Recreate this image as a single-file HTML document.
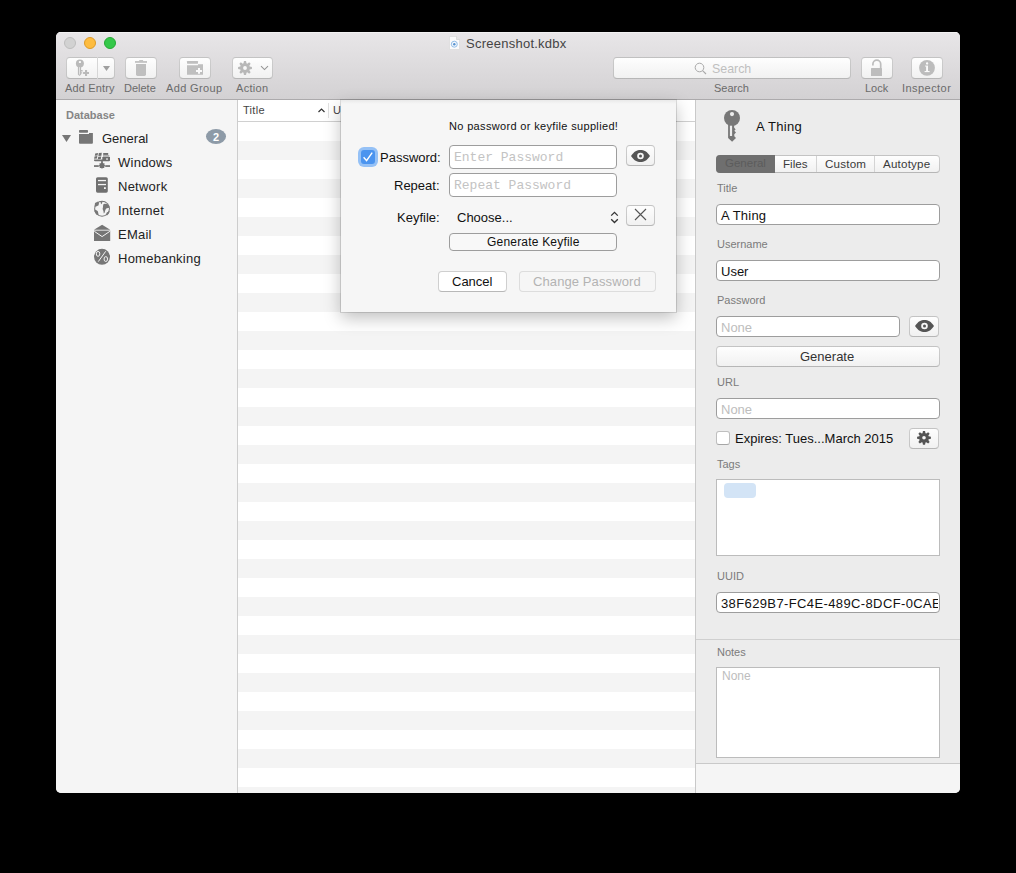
<!DOCTYPE html>
<html><head><meta charset="utf-8">
<style>
*{margin:0;padding:0;box-sizing:border-box}
html,body{width:1016px;height:873px;background:#000;overflow:hidden}
body{font-family:"Liberation Sans",sans-serif;color:#222;position:relative}
#win{position:absolute;left:56px;top:32px;width:904px;height:761px;border-radius:5px;overflow:hidden;background:#f5f5f5}
#in{position:absolute;left:-56px;top:-32px;width:1016px;height:873px}
.a{position:absolute}
.t{position:absolute;white-space:nowrap;line-height:1}
.s11{font-size:11px}.s12{font-size:12px}.s13{font-size:13px}
.btn{position:absolute;border-radius:4px;background:linear-gradient(#fefefe,#f1f1f1);border:1px solid rgba(0,0,0,.19);border-bottom-color:rgba(0,0,0,.28)}
.fld{position:absolute;background:#fff;border:1px solid #9d9d9d;border-radius:4px}
.lbl{position:absolute;white-space:nowrap;line-height:1;font-size:11px;color:#7b7b7b}
.row{position:absolute;left:238px;width:457px;height:19px;background:#f4f4f4}
</style></head><body>
<div id="win"><div id="in">

<!-- toolbar -->
<div class="a" style="left:56px;top:32px;width:904px;height:67px;background:linear-gradient(#e8e6e8,#d3d1d3);"></div>
<div class="a" style="left:56px;top:32px;width:904px;height:1px;background:#f2f1f2"></div>
<div class="a" style="left:56px;top:99px;width:904px;height:1px;background:#acaaac"></div>

<!-- traffic lights -->
<div class="a" style="left:64px;top:37px;width:12px;height:12px;border-radius:50%;background:#d2d2d2;border:0.5px solid #bdbdbd"></div>
<div class="a" style="left:84px;top:37px;width:12px;height:12px;border-radius:50%;background:#fdbc40;border:0.5px solid #dc9a27"></div>
<div class="a" style="left:104px;top:37px;width:12px;height:12px;border-radius:50%;background:#35c84a;border:0.5px solid #26a934"></div>

<!-- title -->
<svg class="a" style="left:449px;top:36px" width="11" height="14" viewBox="0 0 11 14"><path d="M0.5 0.5h7l3 3v10h-10z" fill="#fbfbfb" stroke="#dadada" stroke-width="0.7"/><path d="M7.5 0.5v3h3" fill="#e6e6e6" stroke="#cfcfcf" stroke-width="0.6"/><circle cx="5.3" cy="8.2" r="3" fill="#f4f8fc" stroke="#93bfe8" stroke-width="1"/><circle cx="5.3" cy="8.2" r="1.2" fill="#5792cf"/></svg>
<div class="t s13" style="left:466px;top:37px;color:#444;letter-spacing:.25px">Screenshot.kdbx</div>

<!-- toolbar buttons -->
<div class="btn" style="left:66px;top:57px;width:49px;height:22px"></div>
<div class="a" style="left:97px;top:57px;width:1px;height:22px;background:#d6d6d6"></div>
<div class="btn" style="left:125px;top:57px;width:32px;height:22px"></div>
<div class="btn" style="left:179px;top:57px;width:32px;height:22px"></div>
<div class="btn" style="left:232px;top:57px;width:41px;height:22px"></div>
<div class="btn" style="left:613px;top:57px;width:238px;height:22px;border-color:rgba(0,0,0,.2);border-bottom-color:rgba(0,0,0,.28)"></div>
<div class="btn" style="left:861px;top:57px;width:32px;height:22px"></div>
<div class="btn" style="left:911px;top:57px;width:32px;height:22px"></div>

<div class="t" style="left:712px;top:63px;color:#bfbfbf;font-size:12.4px">Search</div>
<div class="t s11" style="left:65px;top:83px;color:#6b6b6b;letter-spacing:.15px">Add Entry</div>
<div class="t s11" style="left:124px;top:83px;color:#6b6b6b">Delete</div>
<div class="t s11" style="left:166px;top:83px;color:#6b6b6b;letter-spacing:.35px">Add Group</div>
<div class="t s11" style="left:236px;top:83px;color:#6b6b6b;letter-spacing:.3px">Action</div>
<div class="t s11" style="left:714px;top:83px;color:#6b6b6b">Search</div>
<div class="t s11" style="left:865px;top:83px;color:#6b6b6b">Lock</div>
<div class="t s11" style="left:902px;top:83px;color:#6b6b6b;letter-spacing:.45px">Inspector</div>

<!-- sidebar -->
<div class="a" style="left:56px;top:100px;width:181px;height:693px;background:#f5f5f5"></div>
<div class="a" style="left:237px;top:100px;width:1px;height:693px;background:#cdcdcd"></div>
<div class="t s11" style="left:66px;top:110px;color:#858585;font-weight:bold">Database</div>
<div class="t s13" style="left:102px;top:132px;color:#222">General</div>
<div class="t s13" style="left:118px;top:156px;color:#222;letter-spacing:.25px">Windows</div>
<div class="t s13" style="left:118px;top:180px;color:#222;letter-spacing:.25px">Network</div>
<div class="t s13" style="left:118px;top:204px;color:#222;letter-spacing:.25px">Internet</div>
<div class="t s13" style="left:118px;top:228px;color:#222;letter-spacing:.25px">EMail</div>
<div class="t s13" style="left:118px;top:252px;color:#222;letter-spacing:.25px">Homebanking</div>
<div class="a" style="left:206px;top:129px;width:20px;height:15px;border-radius:50%;background:#8d9aa7"></div>
<div class="t s11" style="left:213px;top:132px;color:#fff;font-weight:bold">2</div>

<!-- table -->
<div class="a" style="left:238px;top:100px;width:457px;height:693px;background:#fff"></div>
<div class="a" style="left:238px;top:121px;width:457px;height:1px;background:#d0d0d0"></div>
<div class="t s11" style="left:243px;top:105px;color:#444;letter-spacing:.3px">Title</div>
<div class="a" style="left:328px;top:103px;width:1px;height:15px;background:#e0e0e0"></div>
<div class="t s11" style="left:333px;top:105px;color:#444">U</div>
<div class="row" style="top:141px"></div><div class="row" style="top:179px"></div><div class="row" style="top:217px"></div><div class="row" style="top:255px"></div><div class="row" style="top:293px"></div><div class="row" style="top:331px"></div><div class="row" style="top:369px"></div><div class="row" style="top:407px"></div><div class="row" style="top:445px"></div><div class="row" style="top:483px"></div><div class="row" style="top:521px"></div><div class="row" style="top:559px"></div><div class="row" style="top:597px"></div><div class="row" style="top:635px"></div><div class="row" style="top:673px"></div><div class="row" style="top:711px"></div><div class="row" style="top:749px"></div><div class="row" style="top:787px"></div>

<!-- inspector -->
<div class="a" style="left:695px;top:100px;width:1px;height:693px;background:#c9c9c9"></div>
<div class="a" style="left:696px;top:100px;width:264px;height:663px;background:#ececec"></div>
<div class="a" style="left:696px;top:639px;width:264px;height:1px;background:#cfcfcf"></div>
<div class="a" style="left:696px;top:763px;width:264px;height:1px;background:#c9c9c9"></div>
<div class="a" style="left:696px;top:764px;width:264px;height:29px;background:#f5f5f5"></div>

<div class="t s13" style="left:756px;top:120px;color:#111;letter-spacing:.3px">A Thing</div>

<div class="btn" style="left:716px;top:155px;width:224px;height:18px"></div>
<div class="a" style="left:716px;top:155px;width:59px;height:18px;background:#6f6f6f;border-radius:4px 0 0 4px"></div>
<div class="a" style="left:816px;top:156px;width:1px;height:16px;background:#d4d4d4"></div>
<div class="a" style="left:874px;top:156px;width:1px;height:16px;background:#d4d4d4"></div>
<div class="t" style="left:725px;top:158px;color:#5c5c5c;font-size:11.5px">General</div>
<div class="t" style="left:783px;top:158px;color:#3a3a3a;font-size:11.6px">Files</div>
<div class="t" style="left:825px;top:158px;color:#3a3a3a;font-size:11.6px;letter-spacing:.2px">Custom</div>
<div class="t" style="left:883px;top:158px;color:#3a3a3a;font-size:11.6px;letter-spacing:.2px">Autotype</div>
<div class="lbl" style="left:717px;top:183px">Title</div>
<div class="fld" style="left:716px;top:204px;width:224px;height:21px"></div>
<div class="t s13" style="left:721px;top:209px;color:#111;letter-spacing:.2px">A Thing</div>

<div class="lbl" style="left:717px;top:239px">Username</div>
<div class="fld" style="left:716px;top:260px;width:224px;height:21px"></div>
<div class="t s13" style="left:721px;top:265px;color:#111">User</div>

<div class="lbl" style="left:717px;top:295px">Password</div>
<div class="fld" style="left:716px;top:316px;width:184px;height:21px"></div>
<div class="t s13" style="left:721px;top:321px;color:#bdbdbd">None</div>
<div class="btn" style="left:909px;top:316px;width:30px;height:21px"></div>
<div class="btn" style="left:716px;top:346px;width:224px;height:21px"></div>
<div class="t s13" style="left:800px;top:350px;color:#333">Generate</div>

<div class="lbl" style="left:717px;top:377px">URL</div>
<div class="fld" style="left:716px;top:398px;width:224px;height:21px"></div>
<div class="t s13" style="left:721px;top:403px;color:#bdbdbd">None</div>

<div class="a" style="left:716px;top:431px;width:14px;height:14px;border-radius:3px;background:#fff;border:1px solid rgba(0,0,0,.25);border-bottom-color:rgba(0,0,0,.35)"></div>
<div class="t s13" style="left:735px;top:432px;color:#111">Expires: Tues...March 2015</div>
<div class="btn" style="left:909px;top:428px;width:30px;height:21px"></div>

<div class="lbl" style="left:717px;top:459px">Tags</div>
<div class="a" style="left:716px;top:479px;width:224px;height:77px;background:#fff;border:1px solid #bcbcbc"></div>
<div class="a" style="left:724px;top:483px;width:32px;height:15px;border-radius:4px;background:#d3e4f6"></div>

<div class="lbl" style="left:717px;top:571px">UUID</div>
<div class="fld" style="left:716px;top:592px;width:224px;height:21px;overflow:hidden"><div class="t s13" style="left:4px;top:4px;color:#111;letter-spacing:.38px;width:217px;overflow:hidden">38F629B7-FC4E-489C-8DCF-0CAE</div></div>

<div class="lbl" style="left:717px;top:647px">Notes</div>
<div class="a" style="left:716px;top:667px;width:224px;height:91px;background:#fff;border:1px solid #bcbcbc"></div>
<div class="t s12" style="left:722px;top:670px;color:#bdbdbd">None</div>

<!-- dialog -->
<div class="a" style="left:341px;top:100px;width:335px;height:212px;background:#f6f6f6;box-shadow:0 0 0 1px rgba(0,0,0,.12),0 6px 16px rgba(0,0,0,.25)"></div>
<div class="a" style="left:341px;top:100px;width:335px;height:4px;background:linear-gradient(rgba(0,0,0,.05),rgba(0,0,0,0))"></div>
<div class="t s11" style="left:449px;top:121px;color:#111;letter-spacing:.34px">No password or keyfile supplied!</div>
<div class="a" style="left:358px;top:147px;width:20px;height:20px;border-radius:6px;background:#95c1f6"></div>
<div class="a" style="left:361px;top:150px;width:14px;height:14px;border-radius:3px;background:#4b94ef"></div>
<div class="t s13" style="left:380px;top:151px;color:#111">Password:</div>
<div class="fld" style="left:449px;top:145px;width:168px;height:24px"></div>
<div class="t" style="left:454px;top:151px;font-family:'Liberation Mono',monospace;font-size:13px;color:#c3c3c3">Enter Password</div>
<div class="btn" style="left:626px;top:145px;width:29px;height:21px"></div>
<div class="t s13" style="left:394px;top:179px;color:#111">Repeat:</div>
<div class="fld" style="left:449px;top:173px;width:168px;height:24px"></div>
<div class="t" style="left:454px;top:179px;font-family:'Liberation Mono',monospace;font-size:13px;color:#c3c3c3">Repeat Password</div>
<div class="t s13" style="left:397px;top:211px;color:#111">Keyfile:</div>
<div class="t s13" style="left:457px;top:211px;color:#111">Choose...</div>
<div class="btn" style="left:626px;top:205px;width:29px;height:21px"></div>
<div class="fld" style="left:449px;top:233px;width:168px;height:18px;background:#f8f8f8"></div>
<div class="t s12" style="left:487px;top:236px;color:#111;letter-spacing:.2px">Generate Keyfile</div>
<div class="btn" style="left:438px;top:271px;width:69px;height:21px;background:#fff"></div>
<div class="t s13" style="left:452px;top:275px;color:#111">Cancel</div>
<div class="btn" style="left:519px;top:271px;width:137px;height:21px;background:#f6f6f6;border-color:rgba(0,0,0,.1)"></div>
<div class="t s13" style="left:533px;top:275px;color:#b3b3b3;letter-spacing:.1px">Change Password</div>

<svg class="a" style="left:0;top:0" width="1016" height="873" viewBox="0 0 1016 873">
<!-- toolbar: key plus -->
<g fill="#bababa">
<circle cx="79.9" cy="63.5" r="4"/>
<path d="M77.9 66.5H81.1V70H82.6V71.4H81.1V72.2H82.2V73.5H81.1V74.6L79.5 76L77.9 74.6Z"/>
<rect x="83.1" y="13.9" width="0" height="0"/>
<path d="M83.1 71.9H85V70H87.1V71.9H89V74H87.1V75.9H85V74H83.1Z"/>
</g>
<rect x="78.9" y="61.1" width="2" height="1.9" fill="#fafafa"/>
<rect x="79.2" y="67.2" width="0.7" height="7.3" fill="#f4f4f4"/>
<path d="M103 66H110L106.5 71Z" fill="#9f9f9f"/>
<!-- trash -->
<g fill="#bfbfbf">
<rect x="139.2" y="60.1" width="3.9" height="1.2"/>
<rect x="135" y="61.1" width="12" height="1.7"/>
<path d="M136 64H146V74.3Q146 75.9 144.4 75.9H137.6Q136 75.9 136 74.3Z"/>
</g>
<!-- add group -->
<g fill="#bfbfbf">
<rect x="187" y="61.1" width="11" height="2.6" rx="0.4"/>
<path d="M187 65.2H198V64.2H203V74.8H187Z"/>
</g>
<path d="M196 69.9H198V68H200V69.9H202V71.9H200V73.7H198V71.9H196Z" fill="#fafafa"/>
<!-- action gear -->
<path fill="#b8b8b8" fill-rule="evenodd" d="M243.52 63.33 L243.95 61.08 L246.05 61.08 L246.48 63.33 L247.26 63.65 L249.15 62.37 L250.63 63.85 L249.35 65.74 L249.67 66.52 L251.92 66.95 L251.92 69.05 L249.67 69.48 L249.35 70.26 L250.63 72.15 L249.15 73.63 L247.26 72.35 L246.48 72.67 L246.05 74.92 L243.95 74.92 L243.52 72.67 L242.74 72.35 L240.85 73.63 L239.37 72.15 L240.65 70.26 L240.33 69.48 L238.08 69.05 L238.08 66.95 L240.33 66.52 L240.65 65.74 L239.37 63.85 L240.85 62.37 L242.74 63.65Z M245.00 66.10A1.90 1.90 0 1 0 245.00 69.90A1.90 1.90 0 1 0 245.00 66.10Z"/>
<path d="M261 66.2L264.5 69.6L268 66.2" fill="none" stroke="#969696" stroke-width="1.1"/>
<!-- search magnifier -->
<circle cx="699.5" cy="67.5" r="4.3" fill="none" stroke="#a9a9a9" stroke-width="1"/>
<path d="M702.6 70.6L706 74" stroke="#a9a9a9" stroke-width="1.1"/>
<!-- lock -->
<rect x="871" y="68" width="11" height="8" rx="0.6" fill="#bdbdbd"/>
<path d="M872.9 65.4V64A3.9 3.9 0 0 1 880.7 64V68.2" fill="none" stroke="#bdbdbd" stroke-width="1.7"/>
<!-- info -->
<circle cx="927" cy="67.8" r="7.9" fill="#bcbcbc"/>
<g fill="#fafafa"><circle cx="927.1" cy="63.5" r="1.15"/><rect x="926.1" y="65.6" width="1.9" height="5.6"/><rect x="924.6" y="71" width="5" height="1.1"/><rect x="925" y="65.6" width="1.2" height="0.9"/></g>

<!-- sidebar -->
<g fill="#767676">
<path d="M62 135H71L66.5 142.1Z"/>
<rect x="79" y="130.1" width="9" height="2.6" rx="0.7"/>
<path d="M79 134.1H89V133.1H92.9V142.8Q92.9 143.7 92 143.7H79.9Q79 143.7 79 142.8Z"/>
</g>
<!-- windows icon -->
<g fill="#707070">
<path d="M95.2 153.6L98 153.1L97.6 155.4L94.8 155.8Z"/>
<path d="M98.8 153L101.8 152.8L101.4 155.7L98.4 156Z"/>
<path d="M94.5 156.5L97.3 156.1L97 158.5L94.1 158.8Z"/>
<path d="M98.2 156.8L101.2 156.5L100.8 159L97.8 159.3Z"/>
<rect x="103.2" y="153" width="5" height="1.9"/>
<path d="M94 159.6H102.3V157H110V160.2Q110 161.3 108.9 161.3H95.1Q94 161.3 94 160.2Z"/>
<rect x="101.2" y="161" width="1.6" height="2.6"/>
<rect x="94" y="165.2" width="4.8" height="1.7"/>
<rect x="105.2" y="165.2" width="4.8" height="1.7"/>
<path d="M102 163.2L103 164.4L104.5 164.5L104.4 165.9L105.2 167L104.2 167.9L104.3 169.2L102.9 169.1L102 170L101.1 169.1L99.7 169.2L99.8 167.9L98.8 167L99.6 165.9L99.5 164.5L101 164.4Z" transform="translate(0,-1.2)"/>
</g>
<rect x="103" y="155.1" width="6.3" height="1.7" fill="#a9a9a9"/>
<rect x="106" y="158.1" width="2" height="1.9" fill="#bdbdbd"/>
<!-- server -->
<rect x="96" y="177.2" width="11.8" height="15.5" rx="1.6" fill="#707070"/>
<g fill="#f5f5f5"><rect x="98" y="179.9" width="8" height="1.3"/><rect x="98" y="183.9" width="8" height="1.3"/><rect x="104" y="187.2" width="1.8" height="1.8"/></g>
<!-- globe -->
<circle cx="102.05" cy="208.75" r="7.9" fill="#777"/>
<circle cx="102.05" cy="208.75" r="6.9" fill="#f3f3f3"/>
<g fill="#777">
<path d="M94.5 206.8L96.8 206.3L98.6 205.2L98.8 203.2L98 201.5L95 203Z"/>
<path d="M100.3 201.2L102.8 201L101.9 203.6L101.1 204.2Z"/>
<path d="M103.2 204.6L104.5 203.8L107.2 203.9L108.8 205L109.5 207.5L108.4 208L106.6 208.2L105.4 209.8L104.6 212.8L103.8 213.4L103.4 211L102.6 209L103 207Z"/>
<path d="M94.4 209.5L96.5 210.2L97.8 211.2L98.3 213.2L98.6 215.6L96 214.2L94.6 211.5Z"/>
<path d="M105.8 214.8L106.8 212.6L108.7 211.6L109.8 211L108.9 213.6L107 215.6Z"/>
</g>
<!-- envelope -->
<g fill="#757575">
<path d="M94 229.8L102.1 224.8L110.2 229.8Z"/>
<rect x="94" y="230.6" width="16.2" height="10.4"/>
</g>
<path d="M94.3 231.3L102.1 236.6L109.9 231.3" fill="none" stroke="#f5f5f5" stroke-width="1"/>
<!-- percent -->
<circle cx="102" cy="256.8" r="8" fill="#777"/>
<g fill="none" stroke="#f5f5f5" stroke-width="1">
<ellipse cx="98.05" cy="253.85" rx="1.75" ry="2.45"/>
<ellipse cx="105.8" cy="259.05" rx="1.75" ry="2.45"/>
<path d="M105.7 251.3L98.3 261.6"/>
</g>

<!-- inspector key -->
<g fill="#777">
<circle cx="732" cy="118" r="8"/>
<path d="M728.1 123H734.1V127.6L735.6 129.5L734.3 130.8L736 132.6L734.3 134.3V136.2L736 138L732.1 141.8L728.1 138Z"/>
</g>
<circle cx="732" cy="114.1" r="2.1" fill="#ececec"/>
<rect x="729.9" y="125.7" width="2.2" height="10.3" fill="#ececec"/>

<!-- inspector eye -->
<path fill="#555" d="M915 326C918 321.5 921 320 924.5 320C928 320 931 321.5 934 326C931 330.5 928 332 924.5 332C921 332 918 330.5 915 326Z"/>
<circle cx="924.5" cy="326" r="3.3" fill="#f7f7f7"/><circle cx="924.5" cy="326" r="1.5" fill="#555"/>
<!-- inspector gear -->
<path fill="#555" fill-rule="evenodd" d="M922.52 433.13 L922.95 430.88 L925.05 430.88 L925.48 433.13 L926.26 433.45 L928.15 432.17 L929.63 433.65 L928.35 435.54 L928.67 436.32 L930.92 436.75 L930.92 438.85 L928.67 439.28 L928.35 440.06 L929.63 441.95 L928.15 443.43 L926.26 442.15 L925.48 442.47 L925.05 444.72 L922.95 444.72 L922.52 442.47 L921.74 442.15 L919.85 443.43 L918.37 441.95 L919.65 440.06 L919.33 439.28 L917.08 438.85 L917.08 436.75 L919.33 436.32 L919.65 435.54 L918.37 433.65 L919.85 432.17 L921.74 433.45Z M924.00 436.00A1.80 1.80 0 1 0 924.00 439.60A1.80 1.80 0 1 0 924.00 436.00Z"/>

<path d="M318.5 112L321.5 109L324.5 112" fill="none" stroke="#333" stroke-width="1.2"/>
<!-- dialog icons -->
<path d="M363.6 157.3L366.6 160.6L372.2 152.6" fill="none" stroke="#fff" stroke-width="1.4"/>
<path fill="#555" d="M631 156C634 151.5 637 150 640.5 150C644 150 647 151.5 650 156C647 160.5 644 162 640.5 162C637 162 634 160.5 631 156Z"/>
<circle cx="640.5" cy="156" r="3.3" fill="#f7f7f7"/><circle cx="640.5" cy="156" r="1.5" fill="#555"/>
<path d="M635 209L646 220M646 209L635 220" stroke="#555" stroke-width="1.1"/>
<path d="M611.2 215.6L614.5 212.3L617.8 215.6M611.2 219.2L614.5 222.5L617.8 219.2" fill="none" stroke="#333" stroke-width="1.3"/>
</svg>
</div></div>
</body></html>
